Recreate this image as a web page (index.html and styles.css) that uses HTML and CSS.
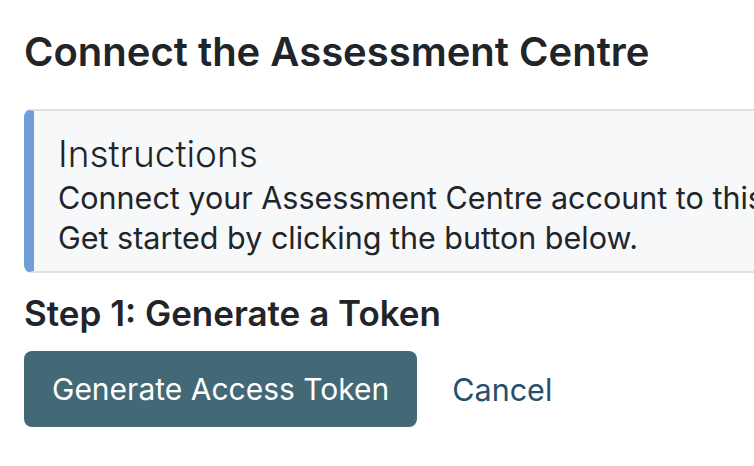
FILE: index.html
```html
<!DOCTYPE html>
<html>
<head>
<meta charset="utf-8">
<link rel="stylesheet" href="styles.css">
</head>
<body>
<main class="page">
  <h1 class="title">Connect the Assessment Centre</h1>
  <section class="callout">
    <h2 class="callout-heading">Instructions</h2>
    <p class="callout-text">Connect your Assessment Centre account to this site to import your assessments.<br>Get started by clicking the button below.</p>
  </section>
  <h3 class="step">Step 1: Generate a Token</h3>
  <div class="actions">
    <button class="btn-primary" type="button">Generate Access Token</button>
    <a class="btn-link" href="#">Cancel</a>
  </div>
</main>
</body>
</html>
```

FILE: styles.css
```css
html, body {
  margin: 0;
  padding: 0;
  background: #ffffff;
  overflow: hidden;
}
body {
  font-family: Inter, "Noto Sans", sans-serif;
  color: #212529;
}
.page {
  padding: 28px 0 0 24px;
  width: 1400px;
}
.title {
  margin: 0;
  font-size: 40px;
  font-weight: 600;
  line-height: 48px;
}
.callout {
  margin-top: 33px;
  background: #f7f8fa;
  border: 2px solid #dee2e6;
  border-left: 10px solid #6f9fd6;
  border-radius: 8px;
  padding: 20px 24px 13px 24px;
  white-space: nowrap;
}
.callout-heading {
  margin: 0;
  font-size: 37px;
  font-weight: 300;
  line-height: 45px;
}
.callout-text {
  margin: 2px 0 0 0;
  font-size: 30.5px;
  line-height: 40px;
}
.step {
  margin: 19px 0 0 0;
  font-size: 35px;
  font-weight: 600;
  line-height: 42px;
}
.actions {
  margin-top: 17px;
  display: flex;
  align-items: center;
  gap: 35px;
}
.btn-primary {
  font-family: inherit;
  font-size: 30px;
  color: #ffffff;
  background: #436876;
  border: none;
  border-radius: 8px;
  height: 76px;
  padding: 0 28px;
}
.btn-link {
  font-size: 30.5px;
  color: #23506a;
  text-decoration: none;
}
```
